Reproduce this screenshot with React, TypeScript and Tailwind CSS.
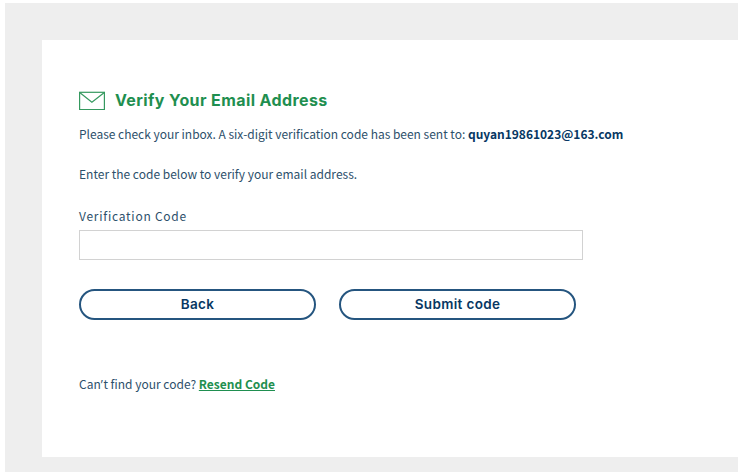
type PillProps = {
  label: string;
  type?: "button" | "submit";
};

function MailIcon() {
  return (
    <svg width="26" height="20" viewBox="0 0 26 20" fill="none" stroke="#35995f" strokeWidth="1.2">
      <rect x="0.6" y="2.3" width="24.8" height="17.3" />
      <path d="M1 2.8L12.9 12.2L25 2.8" />
    </svg>
  );
}

function PillButton({ label, type = "button" }: PillProps) {
  return (
    <button
      type={type}
      className="flex h-[31px] w-[237px] items-center justify-center rounded-full border-2 border-[#25557f] bg-white pb-px font-['Inter',sans-serif] text-[13.5px] font-semibold tracking-[0.35px] text-[#073763]"
    >
      {label}
    </button>
  );
}

export default function App() {
  return (
    <div className="h-[472px] w-[738px] overflow-hidden bg-white pt-[3px] pl-[5px] font-['Noto_Sans_CJK_SC',sans-serif] text-[12px] leading-[18px] text-[#2d506b]">
      <div className="h-[469px] bg-[#eeeeee] pt-[37px] pl-[37px]">
        <div className="h-[417px] bg-white pt-[50px] pl-[37px]">
          {/* Heading */}
          <div className="flex h-5 items-center gap-[10px]">
            <MailIcon />
            <h1 className="font-['Inter',sans-serif] text-[16px] font-bold tracking-[0.4px] whitespace-nowrap text-[#1f8f50]">
              Verify Your Email Address
            </h1>
          </div>

          <p className="mt-[15px] tracking-[-0.01px] whitespace-nowrap">
            Please check your inbox. A six-digit verification code has been sent to:{" "}
            <strong className="font-bold text-[#073763]">quyan19861023@163.com</strong>
          </p>
          <p className="mt-[22px] whitespace-nowrap">Enter the code below to verify your email address.</p>

          {/* Code form */}
          <form onSubmit={(e) => e.preventDefault()}>
            <label htmlFor="code" className="mt-[24px] block tracking-[0.75px]">
              Verification Code
            </label>
            <input
              id="code"
              type="text"
              className="mt-[5px] block h-[30px] w-[504px] border border-[#d2d2d2] bg-white px-2 outline-none"
            />
            <div className="mt-[29px] flex gap-[23px]">
              <PillButton label="Back" />
              <PillButton label="Submit code" type="submit" />
            </div>
          </form>

          <p className="mt-[55px] whitespace-nowrap">
            Can<span className="font-['Open_Sans',sans-serif] leading-none tracking-[0.6px]">’</span>t find your code?{" "}
            <a href="#" className="font-bold text-[#1f8f50] underline">
              Resend Code
            </a>
          </p>
        </div>
      </div>
    </div>
  );
}
